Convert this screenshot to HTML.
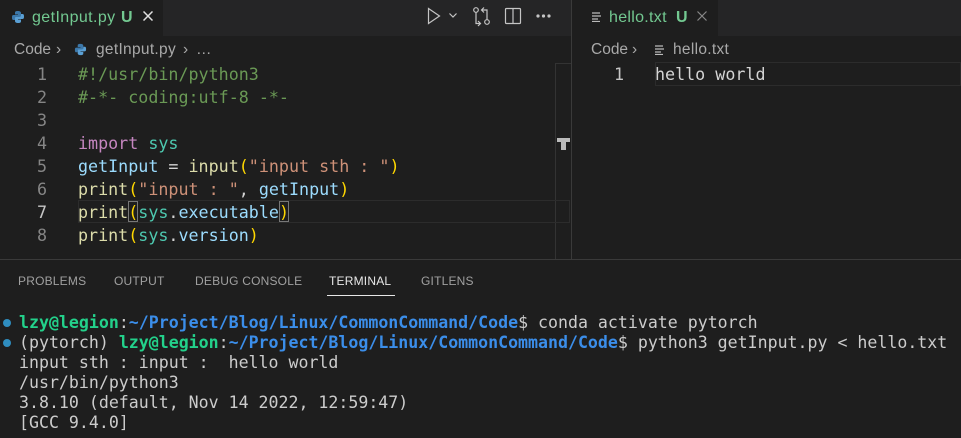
<!DOCTYPE html>
<html><head><meta charset="utf-8"><style>
*{margin:0;padding:0;box-sizing:border-box}
body{width:961px;height:438px;background:#1e1e1e;overflow:hidden;position:relative;font-family:"Liberation Sans","DejaVu Sans",sans-serif;color:#ccc}
.abs{position:absolute;white-space:nowrap}
.tabbar{top:0;height:36px;background:#252526}
.tt{top:8px;font-size:16px;line-height:20px;color:#73c991}
.cr{top:41px;font-size:15.5px;line-height:18px;color:#a9a9a9}
.code{font-family:"DejaVu Sans Mono",monospace;font-size:16.7px;line-height:23px;white-space:pre}
.ln{color:#858585;text-align:right}
.c{color:#6a9955}.k{color:#c586c0}.m{color:#4ec9b0}.v{color:#9cdcfe}.f{color:#dcdcaa}.s{color:#ce9178}.p{color:#ffd700}.w{color:#d4d4d4}
.term{font-family:"DejaVu Sans Mono",monospace;font-size:16.58px;line-height:20px;white-space:pre;color:#cccccc}
.g{color:#23d18b;font-weight:bold}.b{color:#3b8eea;font-weight:bold}
.ptab{top:274px;font-size:12px;color:#a0a0a0;letter-spacing:.2px}
.dot{width:8px;height:8px;border-radius:50%;background:#2f8dbf;left:3px}
</style></head><body>
<div class="abs tabbar" style="left:0;width:571px"></div>
<div class="abs tabbar" style="left:572px;width:389px"></div>
<div class="abs" style="left:571px;top:0;width:1px;height:259px;background:#3a3a3a"></div>
<div class="abs" style="left:0;top:0;width:163px;height:36px;background:#1e1e1e"></div>
<div class="abs" style="left:572px;top:0;width:146px;height:36px;background:#1e1e1e"></div>
<svg class="abs" style="left:11px;top:10px" width="14" height="14" viewBox="0 0 14 14"><path d="M7 1C4 1 4 2 4 3v1.5h3v.5H2.5C1 5 1 6.5 1 7.5S1 10 2.5 10H4V8.5C4 7.5 5 7 6 7h3c1 0 1-.5 1-1.5V3C10 1.5 8.5 1 7 1z" fill="#3c78aa"/><path d="M7 13c3 0 3-1 3-2V9.5H7V9h4.5C13 9 13 7.5 13 6.5S13 4 11.5 4H10v1.5C10 6.5 9 7 8 7H5C4 7 4 7.5 4 8.5V11c0 1.5 1.5 2 3 2z" fill="#5a9fd4"/></svg>
<div class="abs tt" style="left:32px;letter-spacing:0.4px">getInput.py</div>
<div class="abs tt" style="left:121px;font-weight:bold">U</div>
<svg class="abs" style="left:143px;top:11px" width="10" height="10" viewBox="0 0 10 10" stroke="#e0e0e0" stroke-width="1.5"><path d="M0.5 0.5l9 9M9.5 0.5l-9 9"/></svg>
<svg class="abs" style="left:592px;top:12px" width="10" height="10" viewBox="0 0 10 10" stroke="#bbb" stroke-width="1.2"><path d="M0 1h8M0 4h9M0 7h6M0 9.5h8"/></svg>
<div class="abs tt" style="left:609px;letter-spacing:0.3px">hello.txt</div>
<div class="abs tt" style="left:676px;font-weight:bold">U</div>
<svg class="abs" style="left:697px;top:11px" width="10" height="10" viewBox="0 0 10 10" stroke="#888" stroke-width="1.2"><path d="M0.5 0.5l9 9M9.5 0.5l-9 9"/></svg>
<!-- toolbar icons -->
<svg class="abs" style="left:420px;top:0" width="140" height="32" viewBox="0 0 140 32" fill="none" stroke="#c5c5c5" stroke-width="1.2">
<path d="M8.5 8.5v15l11-7.5z"/><path d="M29.5 13.5l3.5 3.5 3.5-3.5"/>
<circle cx="56" cy="10" r="2.3"/><circle cx="67" cy="22" r="2.3"/><path d="M56 12.5v11h4M67 19.5V10h-5M64 7.5l-2.5 2.5 2.5 2.5M58 21l2.5 2.5-2.5 2.5"/>
<rect x="85.5" y="8.5" width="15" height="15" rx="1"/><path d="M93 8.5v15"/>
<circle cx="118" cy="16" r="1" fill="#c5c5c5"/><circle cx="123.5" cy="16" r="1" fill="#c5c5c5"/><circle cx="129" cy="16" r="1" fill="#c5c5c5"/>
</svg>
<!-- breadcrumbs -->
<div class="abs cr" style="left:14px">Code</div>
<div class="abs cr" style="left:56px">›</div>
<svg class="abs" style="left:74px;top:43px" width="13" height="13" viewBox="0 0 14 14"><path d="M7 1C4 1 4 2 4 3v1.5h3v.5H2.5C1 5 1 6.5 1 7.5S1 10 2.5 10H4V8.5C4 7.5 5 7 6 7h3c1 0 1-.5 1-1.5V3C10 1.5 8.5 1 7 1z" fill="#3c78aa"/><path d="M7 13c3 0 3-1 3-2V9.5H7V9h4.5C13 9 13 7.5 13 6.5S13 4 11.5 4H10v1.5C10 6.5 9 7 8 7H5C4 7 4 7.5 4 8.5V11c0 1.5 1.5 2 3 2z" fill="#5a9fd4"/></svg>
<div class="abs cr" style="left:96px;letter-spacing:0.3px">getInput.py</div>
<div class="abs cr" style="left:183px">›</div>
<div class="abs cr" style="left:196px">…</div>
<div class="abs cr" style="left:591px">Code</div>
<div class="abs cr" style="left:632px">›</div>
<svg class="abs" style="left:655px;top:45px" width="10" height="10" viewBox="0 0 10 10" stroke="#bbb" stroke-width="1.2"><path d="M0 1h8M0 4h9M0 7h6M0 9.5h8"/></svg>
<div class="abs cr" style="left:673px;letter-spacing:0.3px">hello.txt</div>
<!-- left code -->
<div class="abs" style="left:555px;top:63px;width:1px;height:196px;background:#333"></div>
<div class="abs" style="left:555px;top:63px;width:16px;height:1px;background:#333"></div>
<div class="abs" style="left:557px;top:138px;width:13px;height:4px;background:#bbb"></div>
<div class="abs" style="left:561px;top:138px;width:5px;height:12px;background:#bbb"></div>
<div class="abs" style="left:78px;top:200px;width:492px;height:23px;border:1px solid #2c2c2c"></div>
<div class="abs" style="left:128px;top:201px;width:10px;height:21px;border:1px solid #777"></div>
<div class="abs" style="left:279px;top:201px;width:10px;height:21px;border:1px solid #777"></div>
<div class="abs code ln" style="left:0;top:63px;width:47px">1
2
3
4
5
6
<span style="color:#c6c6c6">7</span>
8</div>
<div class="abs code" style="left:78px;top:63px"><span class="c">#!/usr/bin/python3</span>
<span class="c">#-*- coding:utf-8 -*-</span>

<span class="k">import</span> <span class="m">sys</span>
<span class="v">getInput</span> <span class="w">=</span> <span class="f">input</span><span class="p">(</span><span class="s">"input sth : "</span><span class="p">)</span>
<span class="f">print</span><span class="p">(</span><span class="s">"input : "</span><span class="w">, </span><span class="v">getInput</span><span class="p">)</span>
<span class="f">print</span><span class="p">(</span><span class="m">sys</span><span class="w">.</span><span class="v">executable</span><span class="p">)</span>
<span class="f">print</span><span class="p">(</span><span class="m">sys</span><span class="w">.</span><span class="v">version</span><span class="p">)</span></div>
<!-- right code -->
<div class="abs" style="left:655px;top:62px;width:306px;height:24px;border:1px solid #2c2c2c"></div>
<div class="abs code" style="left:614px;top:63px;color:#c6c6c6">1</div>
<div class="abs code w" style="left:655px;top:63px">hello world</div>
<!-- panel -->
<div class="abs" style="left:0;top:259px;width:961px;height:1px;background:#3a3a3a"></div>
<div class="abs ptab" style="left:18px">PROBLEMS</div>
<div class="abs ptab" style="left:114px">OUTPUT</div>
<div class="abs ptab" style="left:195px">DEBUG CONSOLE</div>
<div class="abs ptab" style="left:329px;color:#e7e7e7">TERMINAL</div>
<div class="abs" style="left:327px;top:295px;width:68px;height:1px;background:#e7e7e7"></div>
<div class="abs ptab" style="left:421px">GITLENS</div>
<div class="abs dot" style="top:319px"></div>
<div class="abs dot" style="top:339px"></div>
<div class="abs term" style="left:19px;top:313px"><span class="g">lzy@legion</span>:<span class="b">~/Project/Blog/Linux/CommonCommand/Code</span>$ conda activate pytorch
(pytorch) <span class="g">lzy@legion</span>:<span class="b">~/Project/Blog/Linux/CommonCommand/Code</span>$ python3 getInput.py &lt; hello.txt
input sth : input :  hello world
/usr/bin/python3
3.8.10 (default, Nov 14 2022, 12:59:47)
[GCC 9.4.0]</div>
</body></html>
